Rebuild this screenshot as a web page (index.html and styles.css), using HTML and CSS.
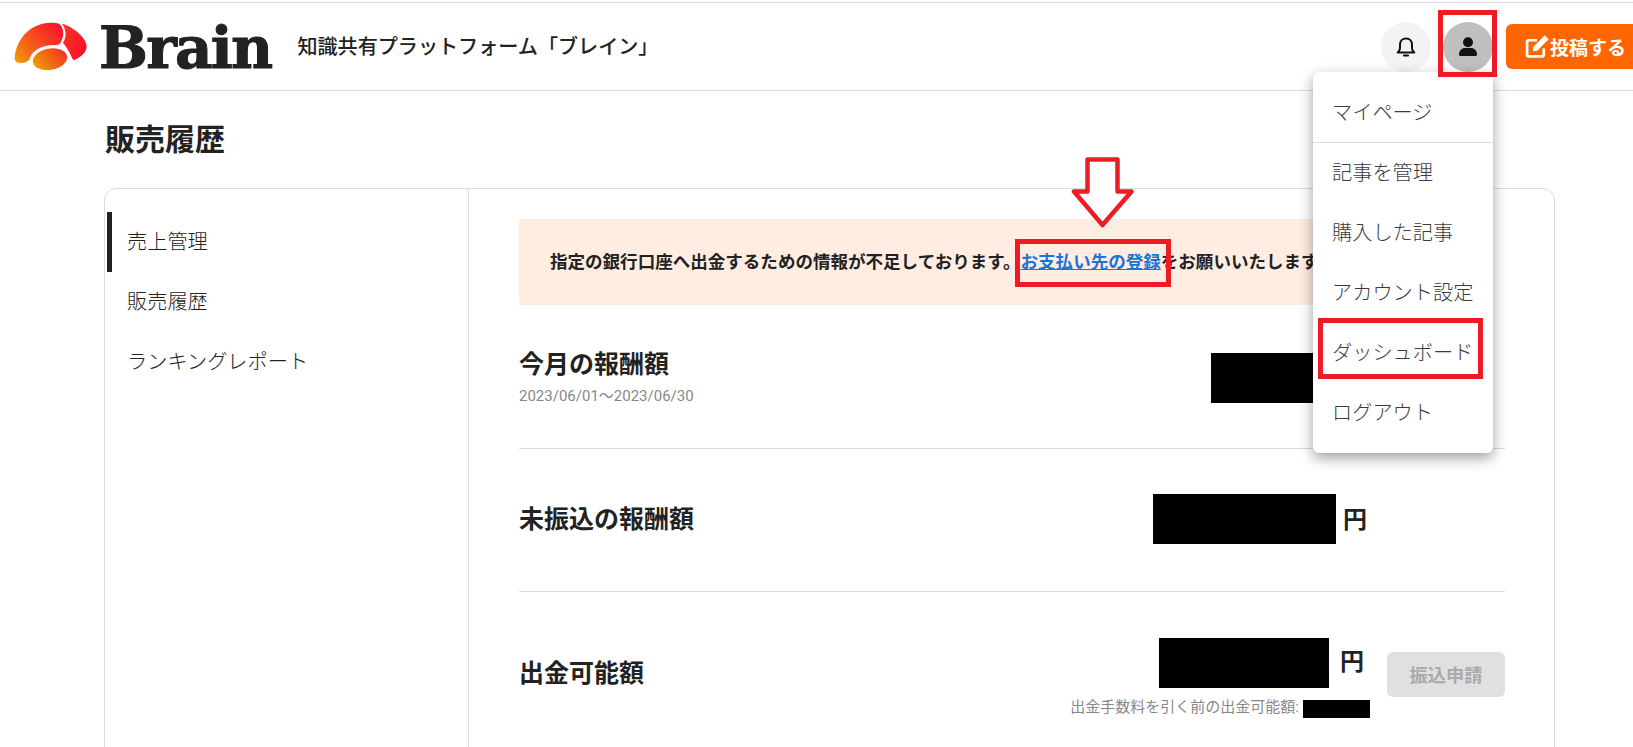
FILE: index.html
```html
<!DOCTYPE html>
<html lang="ja">
<head>
<meta charset="utf-8">
<title>販売履歴 | Brain</title>
<link rel="stylesheet" href="styles.css">
</head>
<body>
<header class="header">
  <div class="brand">
    <svg class="logo-mark" viewBox="40 35 222 155" aria-hidden="true">
      <defs>
        <linearGradient id="lg1" x1="0" y1="1" x2="1" y2="0.2"><stop offset="0" stop-color="#f0a000"/><stop offset="0.45" stop-color="#f5591c"/><stop offset="1" stop-color="#f8152a"/></linearGradient>
        <linearGradient id="lg2" x1="0" y1="0.7" x2="1" y2="0.3"><stop offset="0" stop-color="#efa400"/><stop offset="1" stop-color="#f52a26"/></linearGradient>
        <linearGradient id="lg3" x1="0" y1="0" x2="1" y2="0.6"><stop offset="0" stop-color="#f53a25"/><stop offset="1" stop-color="#fb0f25"/></linearGradient>
      </defs>
      <path fill="url(#lg1)" d="M42 144C46 85 90 38 150 37C162 37 172 38 178 42C192 58 190 80 178 100L120 125 75 155C60 160 42 158 42 144Z"/>
      <path fill="url(#lg3)" d="M184 40C215 48 256 80 258 108C258 125 240 142 218 149L200 115 187 97C198 80 198 60 184 40Z"/>
      <ellipse cx="148" cy="146" rx="57" ry="37" transform="rotate(-10 148 146)" fill="url(#lg2)" stroke="#fff" stroke-width="10"/>
    </svg>
    <span class="logo-word">Brain</span>
    <span class="tagline">知識共有プラットフォーム「ブレイン」</span>
  </div>
  <div class="actions">
    <button class="circle circle-bell" type="button" aria-label="通知">
      <svg viewBox="0 0 24 24" width="24" height="24" fill="none" stroke="#111" stroke-width="2" stroke-linejoin="round"><path d="M12 3.500c-3.600 0-6 2.700-6 6.200v3.600c0 1.700-1 3-2.300 4.200h16.600c-1.300-1.200-2.300-2.500-2.300-4.200V9.700c0-3.500-2.400-6.200-6-6.200Z"/><path d="M10 20.500h4" stroke-width="2.200" stroke-linecap="round"/></svg>
    </button>
    <button class="circle circle-user" type="button" aria-label="アカウント">
      <svg viewBox="0 0 20 20" width="20" height="20" fill="#111"><circle cx="10" cy="5.300" r="5"/><path d="M1 17.500c0-4 3-6.500 6-6.500h6c3 0 6 2.500 6 6.500 0 1-.8 1.500-1.500 1.500h-15C1.800 19 1 18.500 1 17.500Z"/></svg>
    </button>
    <button class="post" type="button">
      <svg viewBox="0 0 24 24" width="25" height="25" fill="none" stroke="#fff" stroke-width="2.600"><path d="M18 14v6a1.500 1.500 0 0 1-1.500 1.500H3.500A1.500 1.500 0 0 1 2 20V7.500A1.500 1.500 0 0 1 3.500 6h8"/><path d="M8.500 12.500 19 2l3 3-10.500 10.500-3.500.5.500-3.500Z" fill="#fff" stroke-width="1"/></svg>
      <span>投稿する</span>
    </button>
  </div>
</header>

<main class="page">
  <h1 class="page-title">販売履歴</h1>
  <section class="card">
    <nav class="side">
      <a class="side-item is-active">売上管理</a>
      <a class="side-item">販売履歴</a>
      <a class="side-item">ランキングレポート</a>
    </nav>
    <div class="content">
      <p class="alert">指定の銀行口座へ出金するための情報が不足しております。<a class="alert-link">お支払い先の登録</a>をお願いいたします。</p>
      <div class="row row-first">
        <div>
          <h2 class="row-label">今月の報酬額</h2>
          <p class="row-date">2023/06/01～2023/06/30</p>
        </div>
        <div class="amount amount-month"><span class="redact redact-month"></span><span class="yen">円</span></div>
      </div>
      <div class="row">
        <h2 class="row-label">未振込の報酬額</h2>
        <div class="amount amount-unpaid"><span class="redact redact-unpaid"></span><span class="yen">円</span></div>
      </div>
      <div class="row row-last">
        <h2 class="row-label">出金可能額</h2>
        <div class="withdraw">
          <div class="withdraw-col">
            <div class="amount amount-avail"><span class="redact redact-avail"></span><span class="yen">円</span></div>
            <p class="note">出金手数料を引く前の出金可能額:<span class="redact redact-note"></span></p>
          </div>
          <button class="apply" type="button">振込申請</button>
        </div>
      </div>
    </div>
  </section>
</main>

<ul class="menu">
  <li class="menu-item menu-first">マイページ</li>
  <li class="menu-item">記事を管理</li>
  <li class="menu-item">購入した記事</li>
  <li class="menu-item">アカウント設定</li>
  <li class="menu-item">ダッシュボード</li>
  <li class="menu-item">ログアウト</li>
</ul>

<div class="mark mark-user"></div>
<div class="mark mark-link"></div>
<div class="mark mark-dash"></div>
<svg class="arrow" viewBox="0 0 63 72" aria-hidden="true"><path d="M16.500 2.500h30v32h14L31.500 68 3 34.500h13.500Z" fill="#fff" stroke="#ed1c24" stroke-width="4.500" stroke-linejoin="round"/></svg>
</body>
</html>
```
FILE: styles.css
```css
* { box-sizing: border-box; }
html, body { height: 100%; overflow: hidden; }
body {
  position: relative;
  margin: 0;
  background: #fff;
  color: #222;
  font-family: Roboto, "Noto Sans CJK JP", sans-serif;
}
h1, h2, p, ul { margin: 0; padding: 0; }

.header {
  display: flex;
  align-items: center;
  justify-content: space-between;
  height: 89px;
  margin-top: 2px;
  border-top: 1px solid #ddd;
  border-bottom: 1px solid #ddd;
  padding-left: 14px;
}
.brand { display: flex; align-items: center; }
.logo-mark { width: 74px; height: 52px; flex: none; margin-top: 2px; }
.logo-word {
  margin: 3px 0 0 11px;
  font-family: "DejaVu Serif", serif;
  font-weight: 700;
  font-size: 58px;
  line-height: 60px;
  color: #222;
  letter-spacing: -1.800px;
  -webkit-text-stroke: 1px #222;
}
.tagline { margin: -3px 0 0 26px; font-size: 20.100px; font-weight: 500; color: #222; }

.actions { display: flex; align-items: center; }
.circle {
  display: flex;
  align-items: center;
  justify-content: center;
  width: 50px;
  height: 50px;
  border: 0;
  border-radius: 50%;
  padding: 0;
}
.circle-bell { background: #f3f3f3; }
.circle-user { margin-left: 12px; background: #bfbfbf; }
.post {
  display: flex;
  align-items: center;
  gap: 0;
  width: 127px;
  height: 45px;
  margin-left: 13px;
  border: 0;
  border-radius: 6px 0 0 6px;
  padding: 0 0 0 19px;
  background: #ff6600;
  color: #fff;
  font: 700 19px Roboto, "Noto Sans CJK JP", sans-serif;
}

.page { padding: 0 0 0 104px; }
.page-title {
  padding: 28px 0 0 1px;
  height: 97px;
  font-size: 30px;
  line-height: 42px;
  font-weight: 700;
}
.card {
  display: flex;
  width: 1451px;
  height: 640px;
  border: 1px solid #ddd;
  border-radius: 12px;
}
.side {
  flex: none;
  width: 364px;
  padding: 23px 0 0 2px;
  border-right: 1px solid #ddd;
}
.side-item {
  display: block;
  height: 60px;
  border-left: 5px solid transparent;
  padding-left: 15px;
  font-size: 20.200px;
  line-height: 60px;
  font-weight: 300;
  color: #222;
}
.side-item.is-active { border-left-color: #222; }

.content { flex: 1; padding: 30px 49px 0 50px; }
.alert {
  display: flex;
  align-items: center;
  height: 86px;
  margin-right: 20px;
  padding: 0 0 3px 31px;
  border-radius: 3px;
  background: #ffede2;
  font-size: 17.550px;
  font-weight: 700;
  color: #222;
  white-space: nowrap;
}
.alert-link { color: #1a73d8; text-decoration: underline; }

.row {
  display: flex;
  align-items: center;
  justify-content: space-between;
  height: 143px;
  border-bottom: 1px solid #ddd;
}
.row-first { height: 144px; }
.row-last { height: 164px; border-bottom: 0; }
.row-label { font-size: 25px; line-height: 36px; font-weight: 700; color: #222; }
.row-date { margin-top: 3px; font-size: 15px; line-height: 20px; color: #888; }

.amount { display: flex; align-items: center; }
.amount-month, .amount-unpaid { margin-right: 138px; }
.redact { display: block; background: #000; }
.redact-month { width: 125px; height: 50px; margin-top: 2px; }
.redact-unpaid { width: 183px; height: 50px; margin-top: -2px; }
.redact-avail { width: 170px; height: 50px; }
.redact-note { display: inline-block; width: 67px; height: 18px; margin-left: 4px; vertical-align: middle; }
.yen { margin-left: 7px; width: 24px; font-size: 24px; font-weight: 700; line-height: 50px; color: #222; }

.withdraw { display: flex; align-items: center; }
.withdraw-col { display: flex; flex-direction: column; align-items: flex-end; margin-top: 6px; }
.amount-avail { margin-right: 6px; }
.amount-avail .redact { margin-right: 4px; margin-top: 2px; }
.note { margin-top: 9px; font-size: 15px; line-height: 20px; color: #888; white-space: nowrap; }
.apply {
  width: 118px;
  height: 45px;
  margin: 0 0 0 17px;
  border: 0;
  border-radius: 6px;
  background: #e0e0e0;
  color: #aaa;
  font: 700 18.300px Roboto, "Noto Sans CJK JP", sans-serif;
}

.menu {
  position: absolute;
  left: 1313px;
  top: 72px;
  width: 180px;
  height: 381px;
  padding-top: 11px;
  border-radius: 6px;
  background: #fff;
  box-shadow: 0 5px 14px rgba(0, 0, 0, .38);
  list-style: none;
}
.menu-item {
  height: 60px;
  padding-left: 19px;
  font-size: 20.200px;
  line-height: 60px;
  font-weight: 300;
  color: #3c3c3c;
}
.menu-first { border-bottom: 1px solid #ddd; }

.mark { position: absolute; border: 5px solid #ed1c24; }
.mark-user { left: 1438px; top: 10px; width: 59px; height: 67px; }
.mark-link { left: 1015px; top: 239px; width: 156px; height: 48px; }
.mark-dash { left: 1318px; top: 318px; width: 165px; height: 61px; }
.arrow { position: absolute; left: 1071px; top: 157px; width: 63px; height: 72px; }
```
